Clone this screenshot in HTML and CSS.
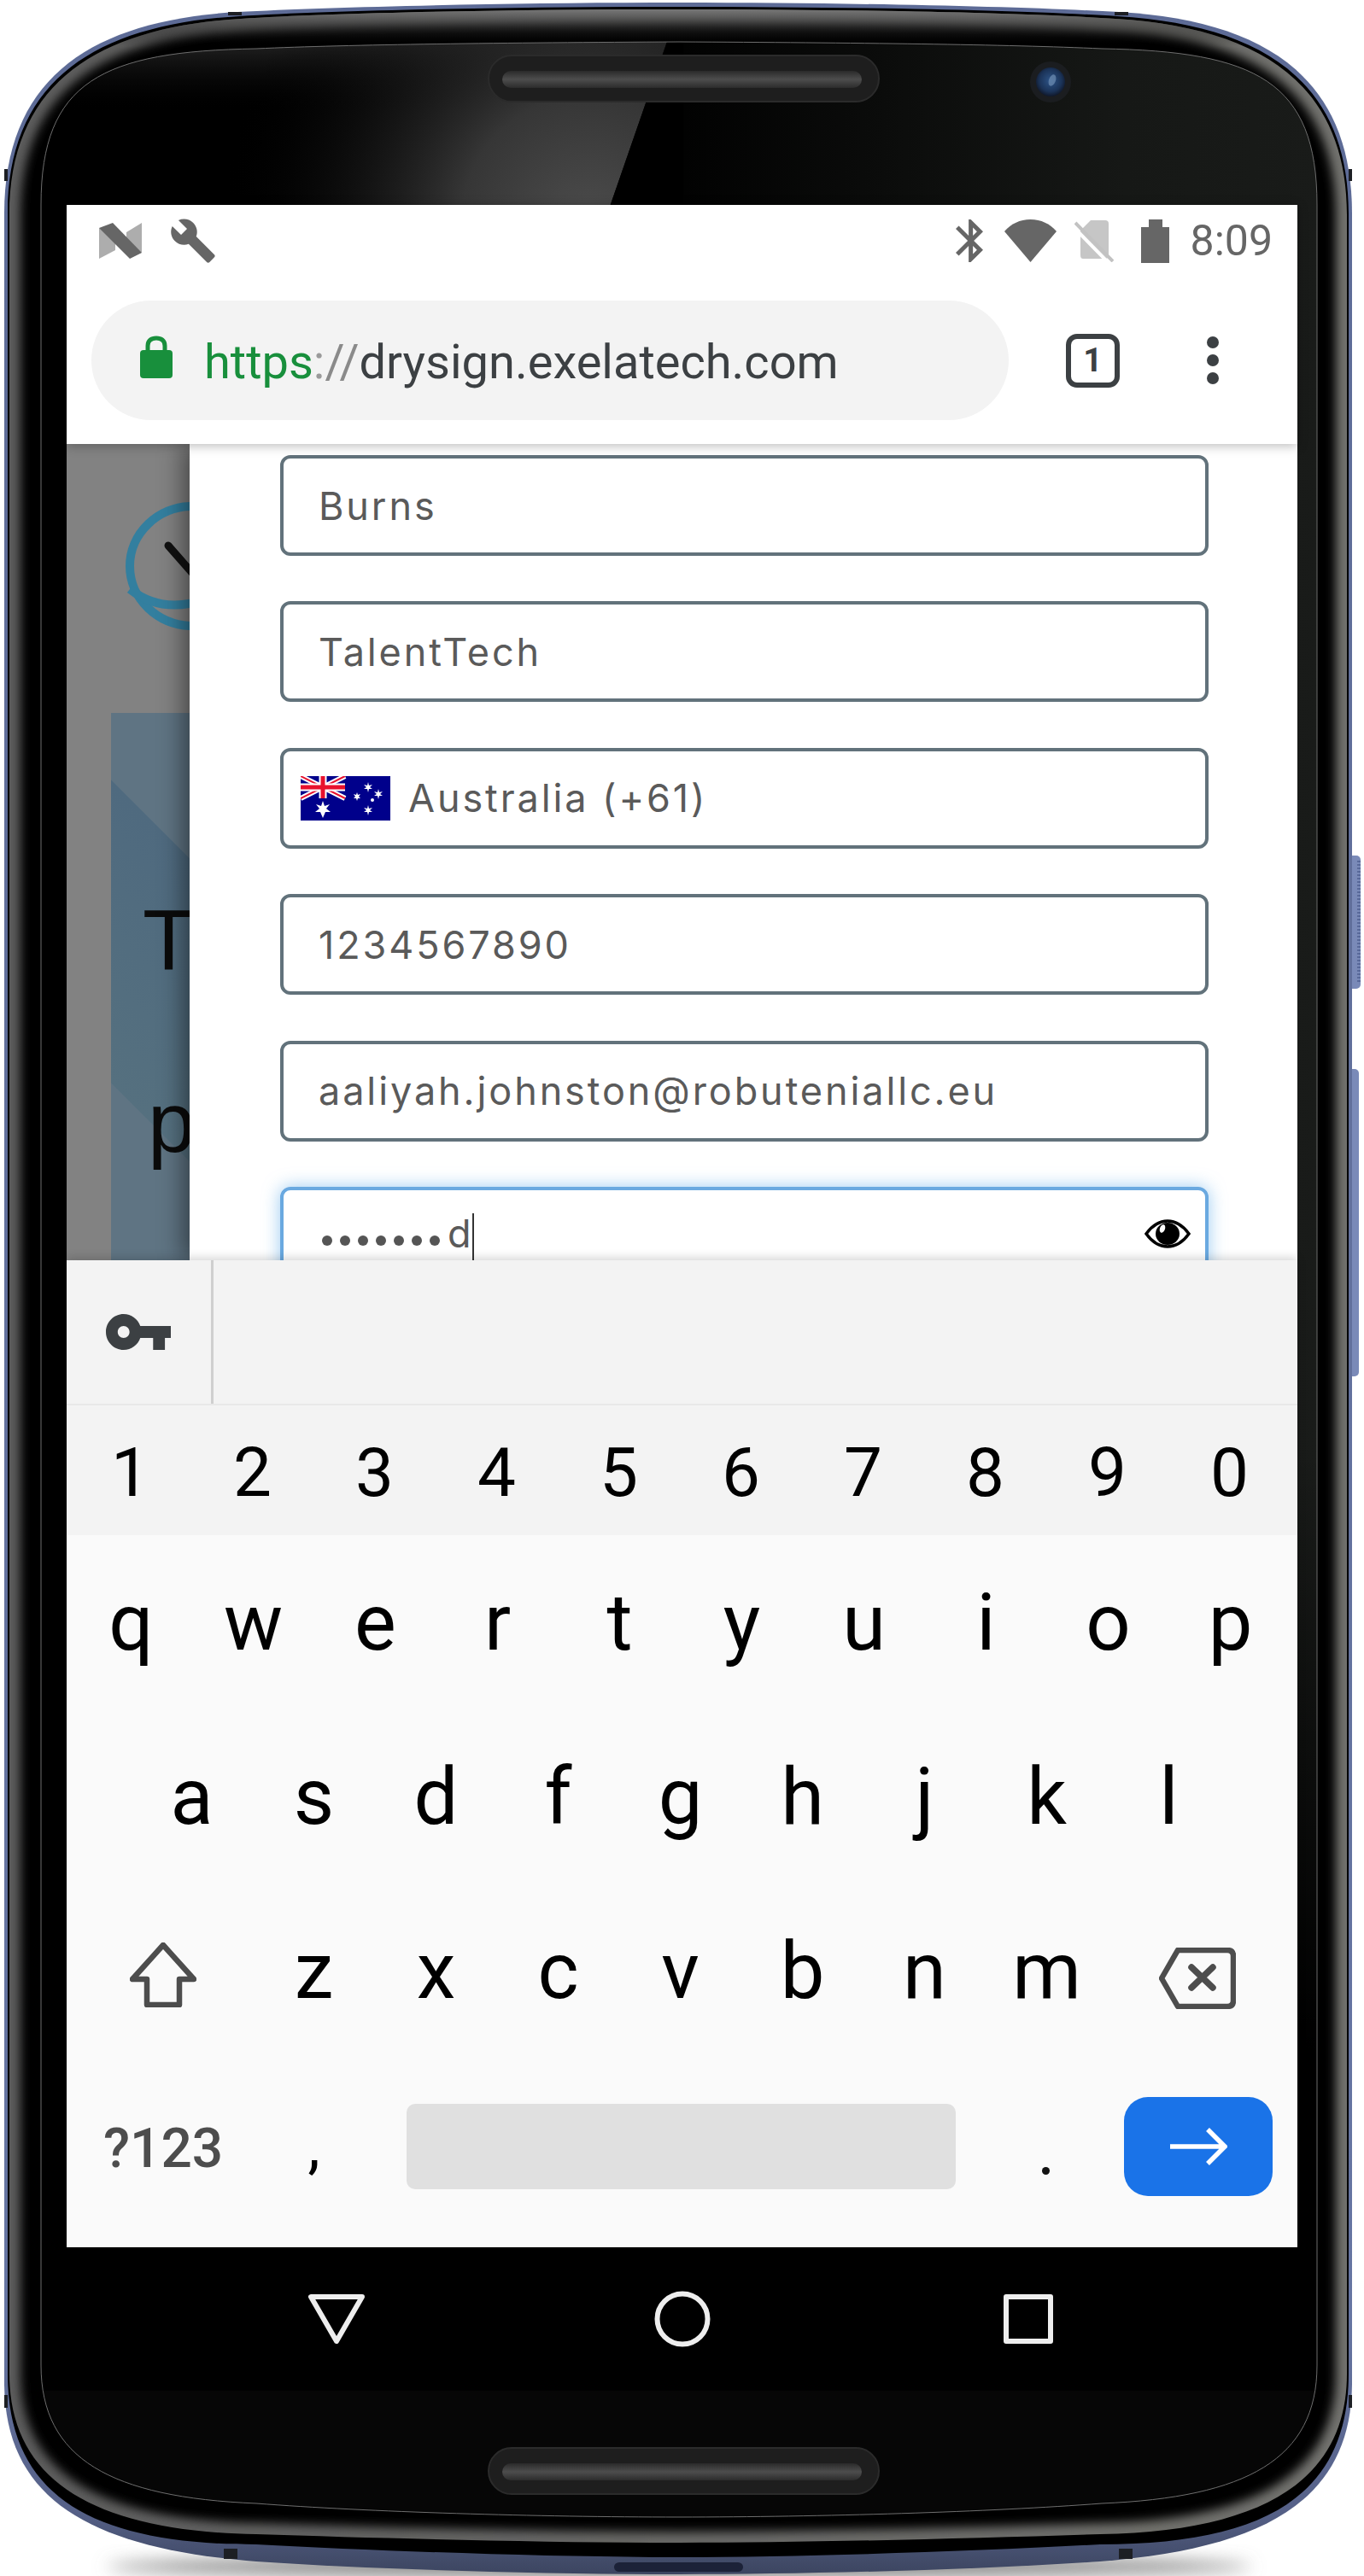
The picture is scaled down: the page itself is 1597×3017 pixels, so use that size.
FILE: index.html
```html
<!DOCTYPE html>
<html lang="en">
<head>
<meta charset="utf-8">
<title>Drysign sign up on a phone</title>
<link rel="stylesheet" href="styles.css">
</head>
<body>
<main class="device">
  <svg class="frame" width="1597" height="3017" viewBox="0 0 1597 3017" aria-hidden="true">
    <defs>
      <path id="rim" d="M795 3C1000 3 1200 8 1310 14C1480 24 1583 90 1583 250V2790C1583 2930 1478 2985 1288 3000C1140 3010 940 3015 795 3015C650 3015 450 3010 300 3000C110 2985 5 2930 5 2790V250C5 90 108 24 278 14C390 8 600 3 795 3Z"/>
      <path id="edge" d="M795 8C1000 8 1200 12 1308 19C1476 29 1579 94 1579 250V2780C1579 2925 1478 2980 1288 2980C1140 2988 940 2995 795 2995C650 2995 450 2988 300 2980C110 2980 9 2925 9 2780V250C9 94 112 29 280 19C390 12 600 8 795 8Z"/>
      <path id="band" d="M795 11C1000 11 1200 15 1306 22C1472 32 1577 96 1577 252V2780C1577 2905 1478 2965 1288 2968C1140 2973 940 2978 795 2978C650 2978 450 2973 300 2968C110 2965 11 2905 11 2780V252C11 96 116 32 282 22C390 15 600 11 795 11Z"/>
      <path id="glass" d="M795 49C1000 50 1180 52 1290 57C1470 60 1542 95 1542 240V2770C1542 2880 1460 2925 1290 2932C1160 2942 960 2948 795 2948C630 2948 430 2942 300 2932C130 2925 48 2880 48 2770V240C48 95 120 60 300 57C410 52 590 50 795 49Z"/>
      <clipPath id="bandClip"><use href="#band"/></clipPath>
      <clipPath id="glassClip"><use href="#glass"/></clipPath>
      <linearGradient id="rimFill" x1="0" y1="0" x2="0" y2="1">
        <stop offset="0" stop-color="#5d6b96"/><stop offset=".9" stop-color="#6675a2"/><stop offset=".975" stop-color="#566188"/><stop offset="1" stop-color="#3c4560"/>
      </linearGradient>
      <linearGradient id="bezelStroke" x1="0" y1="0" x2="1" y2="0">
        <stop offset="0" stop-color="#5c5c5c"/><stop offset="1" stop-color="#72726e"/>
      </linearGradient>
      <linearGradient id="topBand" x1="0" y1="0" x2="0" y2="1">
        <stop offset="0" stop-color="#7a7a7a"/><stop offset="1" stop-color="#000" stop-opacity="0"/>
      </linearGradient>
      <linearGradient id="glassFill" gradientUnits="userSpaceOnUse" x1="48" y1="0" x2="1542" y2="0">
        <stop offset="0" stop-color="#000"/><stop offset=".47" stop-color="#000"/><stop offset=".85" stop-color="#161816"/><stop offset="1" stop-color="#191b19"/>
      </linearGradient>
      <linearGradient id="glassFade" gradientUnits="userSpaceOnUse" x1="0" y1="1700" x2="0" y2="2400">
        <stop offset="0" stop-color="#000" stop-opacity="0"/><stop offset="1" stop-color="#000" stop-opacity="1"/>
      </linearGradient>
      <linearGradient id="topLeft" gradientUnits="userSpaceOnUse" x1="0" y1="50" x2="0" y2="130">
        <stop offset="0" stop-color="#222"/><stop offset="1" stop-color="#000" stop-opacity="0"/>
      </linearGradient>
      <radialGradient id="glare" gradientUnits="userSpaceOnUse" cx="690" cy="262" r="430">
        <stop offset="0" stop-color="#4c4c4c"/><stop offset=".35" stop-color="#363636"/><stop offset="1" stop-color="#000" stop-opacity="0"/>
      </radialGradient>
      <linearGradient id="speakerIn" x1="0" y1="0" x2="0" y2="1">
        <stop offset="0" stop-color="#2a2a2a"/><stop offset=".5" stop-color="#4d4d4d"/><stop offset="1" stop-color="#2c2c2c"/>
      </linearGradient>
      <radialGradient id="lens" cx=".5" cy=".45" r=".55">
        <stop offset="0" stop-color="#2d5488"/><stop offset=".7" stop-color="#1b3358"/><stop offset="1" stop-color="#10182a"/>
      </radialGradient>
      <filter id="soft" x="-10%" y="-10%" width="120%" height="120%"><feGaussianBlur stdDeviation="6"/></filter>
      <filter id="softer" x="-10%" y="-300%" width="120%" height="700%"><feGaussianBlur stdDeviation="10"/></filter>
    </defs>

    <ellipse class="f-shadow" cx="795" cy="3006" rx="670" ry="12" filter="url(#softer)"/>
    <rect class="f-button" x="1576" y="1002" width="17" height="156" rx="5"/>
    <line class="f-ridges" x1="1591" y1="1008" x2="1591" y2="1152"/>
    <rect class="f-button" x="1576" y="1252" width="15" height="360" rx="5"/>
    <use href="#rim" fill="url(#rimFill)"/>
    <rect class="f-bottom-key" x="719" y="3001" width="151" height="11" rx="6"/>
    <rect class="f-notch" x="267" y="14" width="16" height="4"/>
    <rect class="f-notch" x="1305" y="14" width="16" height="4"/>
    <rect class="f-notch" x="262" y="2985" width="16" height="12"/>
    <rect class="f-notch" x="1310" y="2985" width="16" height="12"/>
    <rect class="f-notch" x="5" y="198" width="4" height="14"/>
    <rect class="f-notch" x="1579" y="198" width="4" height="14"/>
    <rect class="f-notch" x="5" y="2805" width="4" height="15"/>
    <rect class="f-notch" x="1579" y="2805" width="4" height="15"/>
    <use href="#edge" fill="#000"/>
    <use href="#band" fill="#000"/>
    <g clip-path="url(#bandClip)">
      <use href="#band" fill="none" stroke="url(#bezelStroke)" stroke-width="26" filter="url(#soft)"/>
      <rect x="0" y="10" width="1597" height="44" fill="url(#topBand)"/>
    </g>
    <use href="#glass" fill="url(#glassFill)"/>
    <g clip-path="url(#glassClip)">
      <rect x="1400" y="1700" width="150" height="1300" fill="url(#glassFade)"/>
      <rect x="40" y="2800" width="1510" height="200" class="f-chin"/>
      <polygon points="40,40 784,40 714,242 40,242" fill="url(#topLeft)"/>
      <polygon points="40,40 784,40 714,242 40,242" fill="url(#glare)"/>
      <polygon points="784,40 800,40 800,242 714,242" class="f-dark"/>
    </g>
    <use href="#glass" class="f-glass-line"/>

    <rect class="f-speaker" x="572" y="65" width="457" height="54" rx="27"/>
    <rect x="588" y="83" width="421" height="20" rx="10" fill="url(#speakerIn)"/>
    <rect class="f-speaker" x="572" y="2867" width="457" height="54" rx="27"/>
    <rect x="588" y="2885" width="421" height="20" rx="10" fill="url(#speakerIn)"/>
    <circle class="f-cam" cx="1230" cy="96" r="24"/>
    <circle cx="1230" cy="96" r="17" fill="url(#lens)"/>
    <ellipse class="f-glint" cx="1232" cy="94" rx="4" ry="7" transform="rotate(20 1232 94)"/>
  </svg>

  <div class="screen">
    <header class="chrome">
      <div class="status">
        <div class="status-left">
          <svg class="ic-n" width="50" height="42" viewBox="0 0 50 42" aria-hidden="true">
            <polygon class="n-light" points="0,6 19,18 19,32 0,42"/>
            <polygon class="n-light" points="50,0 32,11 32,24 50,35"/>
            <polygon class="n-dark" points="0,6 16,0 50,35 36,42"/>
          </svg>
          <svg class="ic-wrench" width="56" height="56" viewBox="0 0 24 24" aria-hidden="true"><path d="M22.7 19l-9.1-9.1c.9-2.3.4-5-1.5-6.9-2-2-5-2.4-7.4-1.3L9 6 6 9 1.6 4.7C.4 7.1.9 10.1 2.9 12.1c1.9 1.9 4.6 2.4 6.9 1.5l9.1 9.1c.4.4 1 .4 1.4 0l2.3-2.3c.5-.4.5-1.1.1-1.4z"/></svg>
        </div>
        <div class="status-right">
          <svg class="ic-bt" width="32" height="50" viewBox="5 2 12.71 20" preserveAspectRatio="none" aria-hidden="true"><path d="M17.71 7.71L12 2h-1v7.59L6.41 5 5 6.41 10.59 12 5 17.59 6.41 19 11 14.41V22h1l5.71-5.71-4.3-4.29 4.3-4.29zM13 5.83l1.88 1.88L13 9.59V5.83zm1.88 10.46L13 18.17v-3.76l1.88 1.88z"/></svg>
          <svg class="ic-wifi" width="61" height="50" viewBox="0 0 61 50" aria-hidden="true"><path d="M30.500 50L0 14C8 5 18 0 30.500 0S53 5 61 14Z"/></svg>
          <svg class="ic-sim" width="46" height="50" viewBox="0 0 46 50" aria-hidden="true">
            <path class="sim-body" d="M19 1H36Q40 1 40 5V42Q40 46 36 46H10Q7 46 7 42V13Z"/>
            <line class="sim-gap" x1="-3" y1="7" x2="41" y2="52"/>
            <line class="sim-slash" x1="1" y1="4" x2="45" y2="49"/>
          </svg>
          <svg class="ic-batt" width="33" height="51" viewBox="0 0 33 51" aria-hidden="true"><path d="M9 0H25V9H33V51H0V9H9Z"/></svg>
          <span class="clock">8:09</span>
        </div>
      </div>
      <div class="toolbar">
        <div class="omnibox">
          <svg class="ic-lock" width="38" height="50" viewBox="0 0 38 50" aria-hidden="true">
            <path class="lock-shackle" d="M9 20V12C9 6 13 3 19 3S29 6 29 12V20"/>
            <rect class="lock-body" x="0" y="17" width="38" height="33" rx="4"/>
          </svg>
          <span class="url"><span class="url-scheme">https</span><span class="url-colon">:</span><span class="url-slash">//</span>drysign.exelatech.com</span>
        </div>
        <div class="tabs"><span>1</span></div>
        <div class="menu-dots"><i></i><i></i><i></i></div>
      </div>
    </header>

    <section class="viewport">
      <div class="backdrop">
        <svg class="bg-logo" width="144" height="315" viewBox="78 520 144 315" aria-hidden="true">
          <ellipse class="logo-ring" cx="226" cy="663" rx="74" ry="70"/>
          <path class="logo-ring" d="M152 690C175 708 200 712 226 706"/>
          <line class="logo-tick" x1="197" y1="639" x2="226" y2="672"/>
        </svg>
        <div class="bg-hero">
          <p class="bg-line">T</p>
          <p class="bg-line bg-line-p">p</p>
        </div>
      </div>
      <form class="modal">
        <div class="field">Burns</div>
        <div class="field">TalentTech</div>
        <div class="field field-phone">
          <svg class="flag" width="105" height="52" viewBox="0 0 105 52" aria-hidden="true">
            <rect class="flag-blue" width="105" height="52"/>
            <path class="flag-w" d="M0 0L52 26M52 0L0 26"/>
            <path class="flag-r" d="M0 0L52 26M52 0L0 26"/>
            <path class="flag-w2" d="M26 0V26M0 13H52"/>
            <path class="flag-r2" d="M26 0V26M0 13H52"/>
            <polygon class="flag-star" points="26,29 28,35 34,33 30,38 35,42 29,42 26,49 23,42 17,42 22,38 18,33 24,35"/>
            <polygon class="flag-star" points="79,7 80,11 84,10 81,13 84,15 80,15 79,19 78,15 74,15 77,13 74,10 78,11"/>
            <polygon class="flag-star" points="66,19 67,22 70,21 68,24 70,26 67,26 66,29 65,26 62,26 64,24 62,21 65,22"/>
            <polygon class="flag-star" points="91,15 92,19 96,18 93,21 96,23 92,23 91,27 90,23 86,23 89,21 86,18 90,19"/>
            <polygon class="flag-star" points="79,34 80,38 84,37 81,40 84,42 80,42 79,46 78,42 74,42 77,40 74,37 78,38"/>
            <circle class="flag-star" cx="84" cy="28" r="2"/>
          </svg>
          <span>Australia (+61)</span>
        </div>
        <div class="field">1234567890</div>
        <div class="field">aaliyah.johnston@robuteniallc.eu</div>
        <div class="field field-focus">
          <span class="mask"><i></i><i></i><i></i><i></i><i></i><i></i><i></i></span><span class="typed">d</span><span class="caret"></span>
          <svg class="eye" width="54" height="34" viewBox="0 0 54 34" aria-hidden="true">
            <path class="eye-lid" d="M2 17C10 6 18 2 27 2C36 2 44 6 52 17C44 28 36 32 27 32C18 32 10 28 2 17Z"/>
            <ellipse class="eye-iris" cx="27" cy="17" rx="14" ry="13"/>
            <ellipse class="eye-spark" cx="21" cy="11" rx="3" ry="5" transform="rotate(20 21 11)"/>
          </svg>
        </div>
      </form>
    </section>

    <section class="keyboard">
      <div class="suggest">
        <div class="suggest-key">
          <svg width="76" height="42" viewBox="1 6 22 12" preserveAspectRatio="none" aria-hidden="true"><path d="M12.65 10C11.83 7.67 9.61 6 7 6c-3.31 0-6 2.69-6 6s2.69 6 6 6c2.61 0 4.83-1.67 5.65-4H17v4h4v-4h2v-4H12.65zM7 14c-1.100 0-2-.9-2-2s.9-2 2-2 2 .9 2 2-.9 2-2 2z"/></svg>
        </div>
      </div>
      <div class="row row-digits"><span>1</span><span>2</span><span>3</span><span>4</span><span>5</span><span>6</span><span>7</span><span>8</span><span>9</span><span>0</span></div>
      <div class="row row-letters"><span>q</span><span>w</span><span>e</span><span>r</span><span>t</span><span>y</span><span>u</span><span>i</span><span>o</span><span>p</span></div>
      <div class="row row-letters row-a"><span>a</span><span>s</span><span>d</span><span>f</span><span>g</span><span>h</span><span>j</span><span>k</span><span>l</span></div>
      <div class="row row-letters row-z">
        <div class="wide-key wide-shift">
          <svg width="78" height="76" viewBox="0 0 78 76" aria-hidden="true"><path class="kb-stroke" d="M39 3L3 43H20V73H58V43H75Z"/></svg>
        </div>
        <span>z</span><span>x</span><span>c</span><span>v</span><span>b</span><span>n</span><span>m</span>
        <div class="wide-key wide-back">
          <svg width="90" height="72" viewBox="0 0 90 72" aria-hidden="true"><path class="kb-stroke" d="M3 36L22 3H80Q87 3 87 10V62Q87 69 80 69H22Z"/><path class="kb-stroke kb-x" d="M38 23L63 47M63 23L38 47"/></svg>
        </div>
      </div>
      <div class="row row-bottom">
        <div class="wide-key sym">?123</div>
        <span class="comma">,</span>
        <div class="spacebar"></div>
        <span class="period"><i></i></span>
        <div class="enter">
          <svg width="68" height="44" viewBox="0 0 68 44" aria-hidden="true"><path class="enter-arrow" d="M1 22H64M45 2L65 22L45 42"/></svg>
        </div>
      </div>
    </section>

    <nav class="nav">
      <svg width="66" height="58" viewBox="0 0 66 58" aria-hidden="true"><path class="nav-stroke" d="M3 3H63L33 55Z"/></svg>
      <svg width="66" height="66" viewBox="0 0 66 66" aria-hidden="true"><circle class="nav-stroke" cx="33" cy="33" r="29.500"/></svg>
      <svg width="58" height="58" viewBox="0 0 58 58" aria-hidden="true"><rect class="nav-stroke" x="3" y="3" width="52" height="52"/></svg>
    </nav>
  </div>
</main>
</body>
</html>
```

FILE: styles.css
```css
* { box-sizing: border-box; }
html, body { margin: 0; padding: 0; background: #fff; }
body { width: 1597px; height: 3017px; overflow: hidden; font-family: Roboto, sans-serif; }

.device { position: relative; width: 1597px; height: 3017px; padding: 240px 0 0 78px; }
.frame { position: absolute; left: 0; top: 0; }
.screen { position: relative; width: 1441px; height: 2560px; display: flex; flex-direction: column; }

/* frame parts */
.f-shadow { fill: #7a7a7a; }
.f-button { fill: #7a8ab8; }
.f-ridges { stroke: #5a6a9a; stroke-width: 4; stroke-dasharray: 2 2; }
.f-bottom-key { fill: #1c2238; }
.f-notch { fill: #1d1f24; }
.f-chin { fill: #060606; }
.f-dark { fill: #000; }
.f-glass-line { fill: none; stroke: #6e6e6e; stroke-width: 1; }
.f-speaker { fill: #1e1e1e; stroke: #2b2b2b; stroke-width: 2; }
.f-cam { fill: #1b1d20; }
.f-glint { fill: #6f8fb4; opacity: .7; }

/* browser chrome */
.chrome { position: relative; z-index: 3; background: #fff; box-shadow: 0 2px 12px rgba(0,0,0,.28); }
.status { height: 84px; display: flex; justify-content: space-between; align-items: center; padding: 0 29px 0 38px; }
.status-left, .status-right { display: flex; align-items: center; }
.status-left svg, .status-right svg { display: block; fill: #666; }
.ic-wrench { margin-left: 32px; }
.ic-wifi { margin-left: 25px; }
.ic-sim { margin-left: 21px; }
.ic-batt { margin-left: 32px; }
.n-light { fill: #adadad; }
.n-dark { fill: #666; }
.sim-body { fill: #c6c6c6; }
.sim-gap { stroke: #fff; stroke-width: 4; }
.sim-slash { stroke: #c2c2c2; stroke-width: 4; }
.clock { margin-left: 25px; font-size: 50px; line-height: 50px; color: #666; }

.toolbar { height: 196px; display: flex; align-items: center; padding: 0 0 0 29px; }
.omnibox { width: 1074px; height: 140px; border-radius: 70px; background: #f3f3f3; display: flex; align-items: center; padding-left: 57px; }
.ic-lock { display: block; margin-top: -8px; }
.lock-shackle { fill: none; stroke: #188f3c; stroke-width: 5; }
.lock-body { fill: #188f3c; }
.url { margin: 3px 0 0 37px; font-size: 56px; line-height: 60px; color: #3c4043; white-space: nowrap; }
.url-scheme { color: #188f3c; }
.url-colon { color: #9a9a9a; }
.url-slash { color: #8a8a8a; }
.tabs { margin-left: 67px; width: 63px; height: 63px; border: 6px solid #3c4043; border-radius: 13px; display: flex; align-items: center; justify-content: center; font-size: 39px; font-weight: 700; color: #3c4043; }
.menu-dots { margin-left: 102px; display: flex; flex-direction: column; gap: 7px; }
.menu-dots i { display: block; width: 14px; height: 14px; border-radius: 50%; background: #3c4043; }

/* page behind the modal */
.viewport { position: relative; z-index: 1; height: 956px; display: flex; overflow: hidden; }
.backdrop { width: 144px; flex: none; background: #828282; display: flex; flex-direction: column; }
.bg-logo { display: block; flex: none; }
.logo-ring { fill: none; stroke: #337f9f; stroke-width: 10; }
.logo-tick { stroke: #111; stroke-width: 9; stroke-linecap: round; }
.bg-hero { margin-left: 52px; flex: 1; padding: 158px 0 0 37px; overflow: hidden; background: linear-gradient(225deg, #5f7483 120px, #4f6a7f 121px, #55707f 371px, #5f7483 372px); }
.bg-line { margin: 0; font-family: "Liberation Sans", Arial, sans-serif; font-size: 100px; line-height: 214px; color: #0b0b0b; white-space: nowrap; }
.bg-line-p { margin-left: 6px; }

/* modal form */
.modal { position: relative; flex: 1; background: #fff; box-shadow: -8px 0 26px rgba(0,0,0,.45); padding: 13px 0 0 106px; display: flex; flex-direction: column; gap: 53.400px; }
.field { flex: none; width: 1087px; height: 118px; border: 4px solid #62727b; border-radius: 12px; padding-left: 41px; display: flex; align-items: center; font-family: Inter, sans-serif; font-weight: 400; font-size: 45px; letter-spacing: 2.900px; color: #5a5a5a; white-space: nowrap; }
.field-phone { padding-left: 20px; }
.flag { display: block; flex: none; margin-right: 21px; }
.flag-blue { fill: #00008b; }
.flag-w { stroke: #fff; stroke-width: 6; }
.flag-r { stroke: #e8112d; stroke-width: 2; }
.flag-w2 { stroke: #fff; stroke-width: 9; }
.flag-r2 { stroke: #e8112d; stroke-width: 5; }
.flag-star { fill: #fff; }
.field-focus { position: relative; border-color: #6aa9e0; box-shadow: 0 0 20px rgba(102,175,233,.65); padding-left: 45px; padding-bottom: 0; align-items: flex-start; padding-top: 22px; }
.mask { display: flex; gap: 9px; margin-top: 31px; }
.mask i { display: block; width: 12px; height: 12px; border-radius: 50%; background: #555; }
.typed { margin-left: 9px; line-height: 60px; margin-top: -1px; letter-spacing: 0; }
.caret { width: 2px; height: 56px; background: #333; margin-left: 1px; margin-top: 5px; }
.eye { position: absolute; right: 17px; top: 34px; }
.eye-lid { fill: #fff; stroke: #000; stroke-width: 3.500; }
.eye-iris { fill: #000; }
.eye-spark { fill: #fff; }

/* keyboard */
.keyboard { position: relative; z-index: 2; height: 1156px; background: #fafafa; box-shadow: 0 -3px 10px rgba(0,0,0,.16); display: flex; flex-direction: column; }
.suggest { height: 170px; background: #f3f3f3; border-bottom: 2px solid #e8e8e8; display: flex; }
.suggest-key { width: 172px; border-right: 3px solid #cfcfcf; display: flex; align-items: center; padding-left: 46px; }
.suggest-key svg { display: block; fill: #3c4043; }
.row { display: flex; align-items: center; flex: none; color: #000; }
.row > span { width: 143px; text-align: center; }
.row-digits { height: 152px; padding: 6px 0 0 3px; background: #f3f3f3; font-size: 80px; }
.row-letters { height: 204px; padding-left: 4px; font-size: 92px; }
.row-a { padding-left: 75px; }
.row-z { padding-left: 8px; }
.wide-key { width: 210px; flex: none; display: flex; justify-content: center; align-items: center; }
.wide-shift { padding-top: 10px; }
.wide-back { padding-top: 18px; }
.kb-stroke { fill: none; stroke: #4d4d4d; stroke-width: 6.500; stroke-linejoin: round; }
.kb-x { stroke-linecap: round; stroke-width: 7.500; }
.row-bottom { height: 221px; padding: 0 0 14px 8px; }
.sym { font-size: 64px; font-weight: 500; color: #4d4d4d; padding-top: 5px; }
.row-bottom .comma { font-size: 72px; }
.spacebar { width: 643px; height: 100px; margin-left: 37px; background: #e0e0e0; border-radius: 10px; }
.row-bottom .period { width: 143px; margin-left: 34px; display: flex; justify-content: center; padding-top: 58px; }
.period i { display: block; width: 9px; height: 9px; border-radius: 50%; background: #111; }
.enter { width: 174px; height: 116px; margin-left: 20px; background: #1a73e8; border-radius: 28px; display: flex; align-items: center; justify-content: center; }
.enter-arrow { fill: none; stroke: #fff; stroke-width: 5.500; }

/* system nav */
.nav { flex: none; height: 168px; background: #000; display: grid; grid-template-columns: repeat(3, 405px); justify-content: center; justify-items: center; align-items: center; padding-bottom: 0; }
.nav-stroke { fill: none; stroke: #eee; stroke-width: 6; stroke-linejoin: round; }
```
